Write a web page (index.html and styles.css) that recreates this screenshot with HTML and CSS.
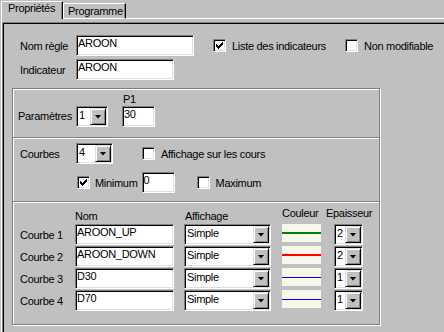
FILE: index.html
```html
<!DOCTYPE html>
<html lang="fr">
<head>
    <meta charset="UTF-8">
    <title>Propriétés</title>
    <link rel="stylesheet" href="styles.css">
</head>
<body>
    <div class="tabs">
        <div class="tab active">Propriétés</div>
        <div class="tab idle">Programme</div>
        <div class="tab-fill"></div>
    </div>

    <div class="panel">
        <div class="frame">
            <div class="row">
                <span class="lbl">Nom règle</span>
                <div class="field w118">AROON</div>
                <label class="check c-liste">
                    <span class="box"><svg width="7" height="7" viewBox="0 0 7 7"><path d="M0 2h1v3h-1zM1 3h1v3h-1zM2 4h1v3h-1zM3 3h1v3h-1zM4 2h1v3h-1zM5 1h1v3h-1zM6 0h1v3h-1z"/></svg></span>
                    Liste des indicateurs
                </label>
                <label class="check"><span class="box"></span>Non modifiable</label>
            </div>
            <div class="row row-ind">
                <span class="lbl">Indicateur</span>
                <div class="field w98">AROON</div>
            </div>

            <div class="group">
                <div class="sect sect-param">
                    <span class="lbl lbl-param">Paramètres</span>
                    <div class="combo w32"><span class="val">1</span><span class="btn"></span></div>
                    <div class="p1">
                        <span class="p1-lbl">P1</span>
                        <div class="field w33">30</div>
                    </div>
                </div>

                <div class="sect sect-courbes">
                    <div class="row">
                        <span class="lbl">Courbes</span>
                        <div class="combo w37"><span class="val">4</span><span class="btn"></span></div>
                        <label class="check c-cours"><span class="box"></span>Affichage sur les cours</label>
                    </div>
                    <div class="row row-minmax">
                        <label class="check c-min">
                            <span class="box"><svg width="7" height="7" viewBox="0 0 7 7"><path d="M0 2h1v3h-1zM1 3h1v3h-1zM2 4h1v3h-1zM3 3h1v3h-1zM4 2h1v3h-1zM5 1h1v3h-1zM6 0h1v3h-1z"/></svg></span>
                            Minimum
                        </label>
                        <div class="field w33 f-min">0</div>
                        <label class="check c-max"><span class="box"></span>Maximum</label>
                    </div>
                </div>

                <div class="sect sect-list">
                    <div class="list-head">
                        <span class="h-gap"></span>
                        <span class="h-nom">Nom</span>
                        <span class="h-aff">Affichage</span>
                        <span class="h-col">Couleur</span>
                        <span class="h-ep">Epaisseur</span>
                    </div>
                    <div class="list-row">
                        <span class="lbl-c">Courbe 1</span>
                        <div class="field w99">AROON_UP</div>
                        <div class="combo w87"><span class="val">Simple</span><span class="btn"></span></div>
                        <div class="swatch"><span class="line green"></span></div>
                        <div class="combo w29"><span class="val">2</span><span class="btn"></span></div>
                    </div>
                    <div class="list-row">
                        <span class="lbl-c">Courbe 2</span>
                        <div class="field w99">AROON_DOWN</div>
                        <div class="combo w87"><span class="val">Simple</span><span class="btn"></span></div>
                        <div class="swatch"><span class="line red"></span></div>
                        <div class="combo w29"><span class="val">2</span><span class="btn"></span></div>
                    </div>
                    <div class="list-row">
                        <span class="lbl-c">Courbe 3</span>
                        <div class="field w99">D30</div>
                        <div class="combo w87"><span class="val">Simple</span><span class="btn"></span></div>
                        <div class="swatch"><span class="line blue"></span></div>
                        <div class="combo w29"><span class="val">1</span><span class="btn"></span></div>
                    </div>
                    <div class="list-row">
                        <span class="lbl-c">Courbe 4</span>
                        <div class="field w99">D70</div>
                        <div class="combo w87"><span class="val">Simple</span><span class="btn"></span></div>
                        <div class="swatch"><span class="line blue"></span></div>
                        <div class="combo w29"><span class="val">1</span><span class="btn"></span></div>
                    </div>
                </div>
            </div>
        </div>
    </div>
</body>
</html>
```

FILE: styles.css
```css
* {
    margin: 0;
    padding: 0;
    box-sizing: border-box;
}

html, body {
    height: 100%;
}

body {
    background: #c0c0c0;
    color: #000;
    font-family: "Liberation Sans", Arial, sans-serif;
    font-size: 11px;
    letter-spacing: -0.3px;
    overflow: hidden;
}

/* tabs */
.tabs {
    display: flex;
    align-items: flex-end;
    height: 19px;
    padding-left: 1px;
}

.tab {
    border-left: 1px solid #fff;
    border-top: 1px solid #fff;
    border-right: 1px solid #000;
    box-shadow: inset -1px 0 0 #808080;
    line-height: 13px;
    white-space: nowrap;
}

.tab.active {
    width: 62px;
    height: 18px;
    padding-left: 6px;
}

.tab.idle {
    width: 63px;
    height: 16px;
    padding: 1px 0 0 4px;
    border-bottom: 1px solid #fff;
}

.tab-fill {
    flex: 1;
    border-bottom: 1px solid #fff;
}

/* panel */
.panel {
    height: calc(100% - 19px);
    margin-left: 1px;
    padding-top: 3px;
    border-left: 1px solid #fff;
}

.frame {
    height: 100%;
    padding-top: 12px;
    border-top: 1px solid #808080;
    border-left: 1px solid #808080;
    box-shadow: inset 1px 1px 0 #000;
}

.row {
    display: flex;
    align-items: center;
    height: 21px;
    padding-left: 17px;
}

.row-ind {
    margin-top: 3px;
}

.lbl {
    width: 56px;
    white-space: nowrap;
}

/* controls */
.field {
    height: 21px;
    padding: 1px 0 0 1px;
    background: #fff;
    border: 1px solid;
    border-color: #808080 #fff #fff #808080;
    box-shadow: inset 1px 1px 0 #000, inset -1px -1px 0 #dfdfdf;
    line-height: 13px;
    white-space: nowrap;
    overflow: hidden;
}

.combo {
    display: flex;
    height: 21px;
    padding: 1px;
    background: #fff;
    border: 1px solid;
    border-color: #808080 #fff #fff #808080;
    box-shadow: inset 1px 1px 0 #000, inset -1px -1px 0 #dfdfdf;
}

.combo .val {
    flex: 1;
    padding-left: 1px;
    line-height: 14px;
    white-space: nowrap;
    overflow: hidden;
}

.combo .btn {
    display: flex;
    align-items: center;
    justify-content: center;
    width: 16px;
    height: 17px;
    background: #c0c0c0;
    border: 1px solid;
    border-color: #dfdfdf #000 #000 #dfdfdf;
    box-shadow: inset 1px 1px 0 #fff, inset -1px -1px 0 #808080;
}

.combo .btn::after {
    content: "";
    width: 7px;
    height: 4px;
    background: #000;
    clip-path: polygon(0 0, 100% 0, 50% 100%);
}

.check {
    display: flex;
    align-items: center;
    gap: 6px;
    white-space: nowrap;
}

.box {
    display: flex;
    align-items: center;
    justify-content: center;
    width: 13px;
    height: 13px;
    background: #fff;
    border: 1px solid;
    border-color: #808080 #fff #fff #808080;
    box-shadow: inset 1px 1px 0 #000, inset -1px -1px 0 #dfdfdf;
}

.box svg {
    display: block;
    shape-rendering: crispEdges;
}

.w118 { width: 118px; margin-right: 19px; }
.w98 { width: 98px; }
.w99 { width: 99px; margin-right: 10px; }
.w33 { width: 33px; }
.w32 { width: 32px; }
.w37 { width: 37px; }
.w87 { width: 87px; margin-right: 11px; }
.w29 { width: 29px; }

.c-liste { width: 132px; }

/* group box */
.group {
    width: 368px;
    margin: 8px 0 0 9px;
    border: 1px solid #808080;
    box-shadow: inset 1px 1px 0 #fff, 1px 1px 0 #fff;
}

.sect + .sect {
    border-top: 1px solid #808080;
    box-shadow: inset 0 1px 0 #fff;
}

.sect-param {
    display: flex;
    align-items: flex-end;
    padding: 3px 0 10px 5px;
}

.lbl-param {
    width: 58px;
    line-height: 21px;
}

.p1 {
    display: flex;
    flex-direction: column;
    margin-left: 14px;
}

.p1-lbl {
    padding-left: 1px;
    line-height: 14px;
}

.sect-courbes {
    padding: 5px 0 8px 7px;
}

.sect-courbes .row {
    padding-left: 0;
}

.c-cours { margin-left: 29px; }

.row-minmax {
    margin-top: 8px;
}

.sect-courbes .row-minmax {
    padding-left: 57px;
}

.c-min { gap: 5px; }
.f-min { margin-left: 4px; }
.c-max { margin-left: 22px; }

/* curve list */
.sect-list {
    padding: 0 0 13px 7px;
}

.list-head {
    display: flex;
    align-items: flex-end;
    height: 22px;
    white-space: nowrap;
}

.h-gap { width: 55px; }
.h-nom { width: 109px; margin-bottom: 1px; line-height: 13px; }
.h-aff { width: 98px; padding-left: 1px; margin-bottom: 1px; line-height: 13px; }
.h-col { width: 44px; margin-bottom: 4px; line-height: 13px; }
.h-ep { margin-bottom: 4px; line-height: 13px; }

.list-row {
    display: flex;
    align-items: center;
    height: 21px;
}

.list-row + .list-row {
    margin-top: 1px;
}

.lbl-c {
    width: 55px;
    white-space: nowrap;
}

.swatch {
    align-self: flex-start;
    width: 39px;
    height: 18px;
    margin-right: 13px;
    padding-top: 8px;
    background: #f8f8ea;
}

.line {
    display: block;
    width: 100%;
    height: 1px;
}

.line.green { height: 2px; background: #008000; }
.line.red { height: 2px; background: #ff0000; }
.line.blue { margin-top: 1px; background: #0000ff; }
```
